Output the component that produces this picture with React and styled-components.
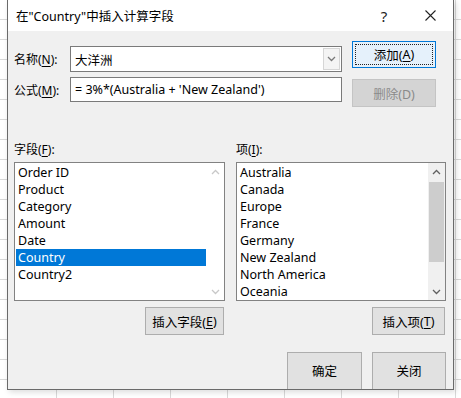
import React from 'react';
import styled, { createGlobalStyle } from 'styled-components';

const GlobalStyle = createGlobalStyle`
  html, body {
    margin: 0;
    padding: 0;
  }
  body {
    width: 461px;
    height: 398px;
    overflow: hidden;
    font-family: "Noto Sans", "Noto Sans CJK SC", sans-serif;
    background-color: #ffffff;
    background-image:
      repeating-linear-gradient(to bottom, transparent 0 19px, #d9d9d9 19px 20px),
      repeating-linear-gradient(to right, transparent 0 56px, #d9d9d9 56px 57px);
  }
`;

const Dialog = styled.div`
  margin-left: 7px;
  width: 445px;
  height: 389px;
  background: #f0f0f0;
  border: 1px solid #6a6a6a;
  border-top: none;
  overflow: hidden;
  display: flex;
  flex-direction: column;
  box-shadow: 2px 2px 6px rgba(0, 0, 0, 0.15);
`;

const TitleBar = styled.div`
  height: 31px;
  flex-shrink: 0;
  background: #ffffff;
  display: flex;
  align-items: center;
  padding-left: 8px;
  font-size: 12.5px;
  color: #000;
`;

const Title = styled.div`
  flex: 1;
`;

const TitleButton = styled.div`
  width: 46px;
  height: 31px;
  display: flex;
  align-items: center;
  justify-content: center;
  font-size: 15px;
  color: #222;
`;

const Body = styled.div`
  padding: 0 7px 0 6px;
  display: flex;
  flex-direction: column;
  font-size: 12px;
  color: #000;
`;

const TopSection = styled.div`
  display: flex;
`;

const FieldColumn = styled.div`
  width: 328px;
  padding-top: 15px;
  display: flex;
  flex-direction: column;
  gap: 5px;
`;

const ActionColumn = styled.div`
  margin-left: 10px;
  width: 84px;
  padding-top: 10px;
  display: flex;
  flex-direction: column;
  gap: 11px;
`;

const FieldRow = styled.div`
  display: flex;
  align-items: center;
  height: ${p => p.$h}px;
`;

const Label = styled.div`
  width: 56px;
  flex-shrink: 0;
  white-space: nowrap;
`;

const Key = styled.span`
  text-decoration: underline;
  text-underline-offset: 2px;
`;

const TextBox = styled.div`
  width: 272px;
  height: 100%;
  box-sizing: border-box;
  background: #fff;
  border: 1px solid #7a7a7a;
  display: flex;
  align-items: center;
  padding-left: 4px;
  font-size: 12.5px;
  white-space: nowrap;
`;

const ComboText = styled.div`
  flex: 1;
`;

const ComboArrow = styled.div`
  width: 17px;
  height: 22px;
  margin-right: 1px;
  box-sizing: border-box;
  border: 1px solid #d6d6d6;
  background: #f4f4f4;
  display: flex;
  align-items: center;
  justify-content: center;
`;

const Button = styled.button`
  width: ${p => p.$w}px;
  height: ${p => p.$h || 28}px;
  flex-shrink: 0;
  box-sizing: border-box;
  padding: 0;
  font-family: inherit;
  font-size: 12.5px;
  color: ${p => (p.disabled ? '#8a8a8a' : '#000')};
  background: ${p => (p.$primary ? '#e5f1fb' : p.disabled ? '#d4d4d4' : '#e1e1e1')};
  border: 1px solid ${p => (p.$primary ? '#0078d7' : p.disabled ? '#c4c4c4' : '#adadad')};
  outline: ${p => (p.$primary ? '1px dotted #222' : 'none')};
  outline-offset: -4px;
  display: flex;
  align-items: ${p => (p.$tall ? 'flex-start' : 'center')};
  padding-top: ${p => (p.$tall ? '8px' : '0')};
  justify-content: center;
`;

const ListsSection = styled.div`
  margin-top: 35px;
  display: grid;
  grid-template-columns: 211px 210px;
  column-gap: 11px;
`;

const ListColumn = styled.div`
  display: flex;
  flex-direction: column;
`;

const ListLabel = styled.div`
  height: 16px;
  line-height: 16px;
  margin-bottom: 4px;
`;

const ListBox = styled.div`
  height: 139px;
  box-sizing: border-box;
  border: 1px solid #828282;
  background: #fff;
  display: flex;
`;

const Items = styled.ul`
  flex: 1;
  margin: 0;
  padding: 1px 1px 0 1px;
  list-style: none;
  overflow: hidden;
`;

const Item = styled.li`
  height: 17px;
  line-height: 17px;
  padding-left: 2px;
  font-size: 12.5px;
  white-space: nowrap;
  background: ${p => (p.$selected ? '#0078d7' : 'transparent')};
  color: ${p => (p.$selected ? '#fff' : '#000')};
`;

const ScrollBar = styled.div`
  width: 17px;
  flex-shrink: 0;
  background: ${p => (p.$active ? '#f0f0f0' : '#fff')};
  display: flex;
  flex-direction: column;
`;

const ScrollArrow = styled.div`
  height: 17px;
  flex-shrink: 0;
  display: flex;
  align-items: center;
  justify-content: center;
`;

const ScrollTrack = styled.div`
  flex: 1;
  display: flex;
  flex-direction: column;
  padding: 2px 1px 0 1px;
`;

const Thumb = styled.div`
  height: 80px;
  background: #cdcdcd;
`;

const ListActions = styled.div`
  display: flex;
  justify-content: flex-end;
  margin-top: 6px;
  padding-right: 1px;
`;

const DialogActions = styled.div`
  display: flex;
  justify-content: flex-end;
  gap: 10px;
  margin-top: 17px;
`;

const Chevron = ({ up, color = '#606060' }) => (
  <svg width="9" height="6" viewBox="0 0 9 6">
    <polyline
      points={up ? '1,5 4.5,1.5 8,5' : '1,1 4.5,4.5 8,1'}
      fill="none"
      stroke={color}
      strokeWidth="1.3"
    />
  </svg>
);

const CloseIcon = () => (
  <svg width="11" height="11" viewBox="0 0 11 11">
    <path d="M0.5 0.5 L10.5 10.5 M10.5 0.5 L0.5 10.5" stroke="#222" strokeWidth="1.1" />
  </svg>
);

const fields = ['Order ID', 'Product', 'Category', 'Amount', 'Date', 'Country', 'Country2'];
const items = ['Australia', 'Canada', 'Europe', 'France', 'Germany', 'New Zealand', 'North America', 'Oceania'];

const App = () => {
  return (
    <>
      <GlobalStyle />
      <Dialog>
        <TitleBar>
          <Title>在"Country"中插入计算字段</Title>
          <TitleButton>?</TitleButton>
          <TitleButton><CloseIcon /></TitleButton>
        </TitleBar>
        <Body>
          <TopSection>
            <FieldColumn>
              <FieldRow $h={26}>
                <Label>名称(<Key>N</Key>):</Label>
                <TextBox>
                  <ComboText>大洋洲</ComboText>
                  <ComboArrow><Chevron color="#7a7a7a" /></ComboArrow>
                </TextBox>
              </FieldRow>
              <FieldRow $h={25}>
                <Label>公式(<Key>M</Key>):</Label>
                <TextBox>= 3%*(Australia + 'New Zealand')</TextBox>
              </FieldRow>
            </FieldColumn>
            <ActionColumn>
              <Button $w={84} $h={27} $primary>添加(<Key>A</Key>)</Button>
              <Button $w={84} disabled>删除(D)</Button>
            </ActionColumn>
          </TopSection>

          <ListsSection>
            <ListColumn>
              <ListLabel>字段(<Key>F</Key>):</ListLabel>
              <ListBox>
                <Items>
                  {fields.map(f => (
                    <Item key={f} $selected={f === 'Country'}>{f}</Item>
                  ))}
                </Items>
                <ScrollBar>
                  <ScrollArrow><Chevron up color="#c8c8c8" /></ScrollArrow>
                  <ScrollTrack />
                  <ScrollArrow><Chevron color="#c8c8c8" /></ScrollArrow>
                </ScrollBar>
              </ListBox>
              <ListActions>
                <Button $w={79}>插入字段(<Key>E</Key>)</Button>
              </ListActions>
            </ListColumn>
            <ListColumn>
              <ListLabel>项(<Key>I</Key>):</ListLabel>
              <ListBox>
                <Items>
                  {items.map(i => (
                    <Item key={i}>{i}</Item>
                  ))}
                </Items>
                <ScrollBar $active>
                  <ScrollArrow><Chevron up /></ScrollArrow>
                  <ScrollTrack><Thumb /></ScrollTrack>
                  <ScrollArrow><Chevron /></ScrollArrow>
                </ScrollBar>
              </ListBox>
              <ListActions>
                <Button $w={73}>插入项(<Key>T</Key>)</Button>
              </ListActions>
            </ListColumn>
          </ListsSection>

          <DialogActions>
            <Button $w={75} $h={40} $tall>确定</Button>
            <Button $w={74} $h={40} $tall>关闭</Button>
          </DialogActions>
        </Body>
      </Dialog>
    </>
  );
};

export default App;
